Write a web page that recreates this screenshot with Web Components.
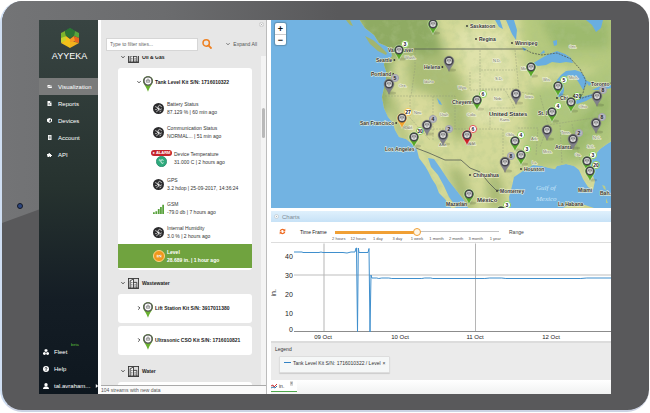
<!DOCTYPE html>
<html lang="en">
<head>
<meta charset="utf-8">
<title>Ayyeka – Visualization</title>
<style>
html,body{margin:0;height:100%;background:#fff}
body{font-family:"Liberation Sans",Arial,sans-serif;font-size:5px;line-height:8px;color:#333}
</style>
</head>
<body>
<ay-device>
  <ay-sidebar>
    <ay-nav icon="folder" active>Visualization</ay-nav>
    <ay-nav icon="report">Reports</ay-nav>
    <ay-nav icon="cube">Devices</ay-nav>
    <ay-nav icon="account">Account</ay-nav>
    <ay-nav icon="puzzle">API</ay-nav>
    <ay-nav slot="foot" low icon="fleet" tag="beta">Fleet</ay-nav>
    <ay-nav slot="foot" low icon="help">Help</ay-nav>
    <ay-nav slot="foot" low icon="user" more>tal.avraham...</ay-nav>
  </ay-sidebar>
  <ay-tree>
    <ay-group>Oil &amp; Gas</ay-group>
    <ay-card open title-text="Tank Level Kit S/N: 1716010322">
      <ay-stream icon="plug" label="Battery Status">87.129 % | 60 min ago</ay-stream>
      <ay-stream icon="plug" label="Communication Status">NORMAL... | 51 min ago</ay-stream>
      <ay-stream icon="temp" alarm label="Device Temperature">31.000 C | 2 hours ago</ay-stream>
      <ay-stream icon="plug" label="GPS">3.2 hdop | 25-09-2017, 14:36:24</ay-stream>
      <ay-stream icon="signal" label="GSM">-79.0 db | 7 hours ago</ay-stream>
      <ay-stream icon="plug" label="Internal Humidity">3.0 % | 2 hours ago</ay-stream>
      <ay-stream icon="level" selected label="Level">28.689 in. | 1 hour ago</ay-stream>
    </ay-card>
    <ay-group>Wastewater</ay-group>
    <ay-card title-text="Lift Station Kit S/N: 3917011380"></ay-card>
    <ay-card title-text="Ultrasonic CSO Kit S/N: 1716010821"></ay-card>
    <ay-group>Water</ay-group>
    <ay-card title-text=""></ay-card>
  </ay-tree>
  <ay-main><ay-map></ay-map><ay-charts></ay-charts></ay-main>
</ay-device>

<script>
const ICONS = {
  folder:'<path fill="#fff" d="M1 2h4l1 1h3v1H3L1 8zM3 5h8L9 8H2z"/>',
  report:'<path fill="#fff" d="M1 0h5v3h3v7H1z"/><path fill="#fff" d="M7 0l2 2H7z"/><path stroke="#2a3535" d="M3 5h3M3 7.500h4"/>',
  cube:'<path fill="#fff" d="M5 0l5 2v5L5 10 0 7V2z"/><path fill="#2a3535" d="M5 4l3-1.500v4L5 8z"/>',
  account:'<path fill="#fff" d="M2 0h7v10H2z"/><path stroke="#2a3535" d="M3.500 2.500h4M3.500 5h4M3.500 7.500h4"/>',
  puzzle:'<path fill="#fff" d="M0 4h3C2 1 7 1 6 4h2v2c3-1 3 3 0 2v2H6c0-2-2-2-2 0H1V7H0z"/>',
  fleet:'<g fill="#fff"><path d="M5 0l2.500 1.300v2.500L5 5 2.500 3.800V1.300zM2.300 5l2.400 1.300v2.400L2.300 10 0 8.700V6.300zM7.700 5L10 6.300v2.400L7.700 10 5.300 8.700V6.300z"/></g>',
  help:'<circle cx="5" cy="5" r="5" fill="#fff"/><path fill="none" stroke="#141c22" stroke-width="1.500" d="M3.500 4c0-2 3-2 3 0C6.500 5 5 5 5 6.300M5 7v1.300"/>',
  user:'<circle cx="5" cy="2.800" r="2.800" fill="#fff"/><path fill="#fff" d="M0 10c0-6 10-6 10 0z"/>',
  close:'<circle cx="5" cy="5" r="4.300" fill="#f4f4f4" stroke="#aaa" stroke-width=".8"/><path stroke="#999" d="M3.300 3.300l3.400 3.400M6.700 3.300L3.300 6.700"/>',
  search:'<circle cx="4.200" cy="4" r="3.200" fill="none" stroke="#ee8122" stroke-width="1.500"/><path stroke="#ee8122" stroke-width="1.800" d="M6.500 6.400L9.500 9.600"/>',
  down:'<path fill="none" stroke="currentColor" stroke-width="2" d="M1 3l4 4 4-4"/>',
  right:'<path fill="none" stroke="currentColor" stroke-width="2.200" d="M3 1l4 4-4 4"/>',
  caret:'<path fill="#fff" d="M2 0l6 5-6 5z"/>',
  building:'<rect x=".4" y=".4" width="9.200" height="9.200" fill="#ddd" stroke="#333" stroke-width=".8"/><path fill="#fff" stroke="#333" stroke-width=".8" d="M2 9V2.500L5 1v8M5 4h3v5"/><path stroke="#333" stroke-width=".8" d="M3 4h1M3 5.700h1M3 7.300h1M6 5.700h1M6 7.300h1M1 9h8"/>',
  plug:'<circle cx="5" cy="5" r="5" fill="#2b2b2d"/><path fill="none" stroke="#d4d4d4" stroke-width=".8" d="M2 3.200l2 1 2-2.400M4 4.200l1.300 2.200L3 8M5.300 6.400L8 5.300M6 2l2 1.500M2 6h1.500M6 8l1.500-.8"/><circle cx="5" cy="5" r="1" fill="#eee"/>',
  temp:'<circle cx="5" cy="5" r="4.700" fill="#2eaa7c" stroke="#1d7f63" stroke-width=".6"/><circle cx="3.400" cy="3.800" r=".6" fill="none" stroke="#fff" stroke-width=".5"/><path fill="none" stroke="#fff" stroke-width=".8" d="M6.800 4c-2-1.500-3 .6-2 2 .7 1 1.500.6 2 .2"/>',
  signal:'<path fill="#57a13a" d="M0 8.500h1.600V10H0zM2.200 7.500h1.600V10H2.200zM4.400 5.500H6V10H4.400zM6.400 3.700H8V10H6.400zM8.400 1.500H10V10H8.400z"/>',
  level:'<circle cx="5" cy="5" r="4.600" fill="#f0981c" stroke="#ffd58b" stroke-width=".8"/><path stroke="#fff" stroke-width=".8" d="M3.500 4v2.200M5 6.200V4.300L6.500 6V4"/>',
  refresh:'<g fill="#ee6b22"><path d="M1 4.500C1 1 6 0 7.500 2L9 1v3.500H5.500L6.500 3.300C5 2.500 3 3 3 4.500zM9 5.500C9 9 4 10 2.500 8L1 9V5.500h3.500L3.500 6.700C5 7.500 7 7 7 5.500z"/></g>',
  pin:'<path fill="#69b12f" d="M0 4.200C0-1.400 9-1.400 9 4.200 9 7 6 9 4.500 14 3 9 0 7 0 4.200z"/><circle cx="4.500" cy="4.300" r="3.700" fill="#fff" stroke="#555" stroke-width="1.300"/><path fill="none" stroke="#666" stroke-width=".6" d="M3 3.400h3v2H3zM4.500 2v3"/>',
  gear:'<circle cx="5" cy="5" r="4" fill="#fff" stroke="#a9b6bf"/><circle cx="5" cy="5" r="1.400" fill="#a9b6bf"/>',
  hex:'<path fill="#1f8a3c" d="M9 0l5 3-5 5-5-5z"/><path fill="#7cb52c" d="M4 3L0 5v6l5-3z"/><path fill="#2c7434" d="M4 3l5-3 5 3-1 5-4 2-4-2z"/><path fill="#57a63a" d="M14 3l4 2v5l-5-2z"/><path fill="#c9d32c" d="M0 10l5-2v5l-5 2z"/><path fill="#f4c21a" d="M5 8l4 3v9l-9-5 5-3z"/><path fill="#f59a22" d="M9 11l4-3 2 5-6 2z"/><path fill="#e9641f" d="M13 8l5 2v5l-4-1z"/><path fill="#f2b01c" d="M9 14l5 0 4 1-9 5z"/>'
};
const VB = {pin:'0 0 9 14', hex:'0 0 18 20'};
const define = (name, html, setup) => customElements.define(name, class extends HTMLElement {
  constructor(){ super(); this.attachShadow({mode:'open'}); }
  connectedCallback(){
    if (this.shadowRoot.childNodes.length) return;
    const t = document.createElement('template');
    t.innerHTML = typeof html === 'function' ? html(this) : html;
    this.shadowRoot.append(t.content.cloneNode(true));
    if (setup) setup(this);
  }
});

define('ay-icon', el => {
  const n = el.getAttribute('name');
  return `<style>:host{display:inline-block;width:10px;height:10px;flex:none}svg{display:block;width:100%;height:100%}</style>
  <svg viewBox="${VB[n] || '0 0 10 10'}" aria-hidden="true">${ICONS[n]}</svg>`;
});

define('ay-device', `<style>
:host{display:block;height:100vh;box-sizing:border-box;padding:1px 1px 1px 0}
.frame{position:relative;height:100%;box-sizing:border-box;padding:19px 38px 16px 37px;border-left:2px solid #cfdef2;border-bottom:2px solid #ccd3e4;border-radius:22px;background:#59595b;overflow:hidden}
.glare{position:absolute;inset:0;clip-path:polygon(0 0,94% 0,0 222px);background:linear-gradient(90deg,#737476,#6b6c6e 25%,#59595b 52%)}
.cam{position:absolute;left:15px;top:202px;width:4px;height:4px;border-radius:50%;border:1px solid #151a26;background:#2b4680}
.screen{position:relative;display:flex;height:100%;overflow:hidden;background:#fff}
</style><div class="frame"><div class="glare"></div><div class="cam"></div><div class="screen"><slot></slot></div></div>`);

define('ay-sidebar', `<style>
:host{display:flex;flex-direction:column;flex:none;width:59px;background:linear-gradient(#384442,#26322f 45%,#141d25 75%,#0e171f)}
.logo{display:flex;flex-direction:column;align-items:center;gap:2px;height:58px;box-sizing:border-box;padding-top:8px;padding-left:2px;color:#fff;font-size:9px;line-height:12px}
.logo ay-icon{width:18px;height:20px}
nav{display:flex;flex-direction:column;flex:1}
.gap{flex:1}
</style><div class="logo"><ay-icon name="hex"></ay-icon><span>AYYEKA</span></div>
<nav><slot></slot><div class="gap"></div><slot name="foot"></slot></nav>`);

define('ay-nav', el => `<style>
:host{display:block}
a{display:flex;align-items:center;gap:6px;height:17px;padding-left:8px;color:#fff;text-decoration:none;font-size:6px;line-height:8px;white-space:nowrap;position:relative}
:host([active]) a{background:#7a7b7b}
:host([low]) a{padding-left:4px;gap:5px}
ay-icon{width:5px;height:5px}
:host([low]) ay-icon{width:6px;height:6px}
sup{position:absolute;left:32px;top:-1px;color:#5fc03b;font-size:4px;line-height:6px}
:host([low]) .more{width:4px;height:4px}
</style><a href="#"><ay-icon name="${el.getAttribute('icon')}"></ay-icon><slot></slot>${el.hasAttribute('tag') ? `<sup>${el.getAttribute('tag')}</sup>` : ''}${el.hasAttribute('more') ? '<ay-icon class="more" name="caret"></ay-icon>' : ''}</a>`);

define('ay-tree', `<style>
:host{display:flex;flex-direction:column;flex:none;width:166px;box-sizing:border-box;margin-left:3px;background:#e7e7e7;border-right:1px solid #bcbcbc;position:relative}
header{display:flex;align-items:center;height:36px;box-sizing:border-box;padding:12px 9px 0 5px;position:relative}
input{width:92px;height:13px;box-sizing:border-box;border:1px solid #d6d6d6;padding:0 3px;background:#fff;font:5px "Liberation Sans",Arial,sans-serif;color:#444}
input::placeholder{color:#666;opacity:1}
button{border:0;background:none;padding:0;display:flex;align-items:center;font:5px/8px "Liberation Sans",Arial,sans-serif;color:#555}
.s{margin-left:4px}
.e{margin-left:auto;gap:3px}.e ay-icon{width:4px;height:4px}
.x{position:absolute;right:2px;top:2px}.x ay-icon{width:5px;height:5px}
.body{flex:1;min-height:0;display:flex}
.list{flex:1;overflow:hidden;padding:0 9px 0 17px}
.inner{margin-top:-6px}
.bar{width:5px;background:#f4f4f4}
.thumb{width:3px;height:30px;margin:52px 1px 0;border-radius:2px;background:#b9b9b9}
footer{height:9px;border-top:1px solid #aaa;box-sizing:border-box;background:#fafafa;color:#555;line-height:8px;padding-left:0}
</style>
<header><input type="search" aria-label="Filter sites" placeholder="Type to filter sites..."><button class="s" aria-label="Search"><ay-icon name="search"></ay-icon></button><button class="e"><ay-icon name="down"></ay-icon>Expand All</button><button class="x" aria-label="Close"><ay-icon name="close"></ay-icon></button></header>
<div class="body"><div class="list"><div class="inner"><slot></slot></div></div><div class="bar"><div class="thumb"></div></div></div>
<footer>104 streams with new data</footer>`);

define('ay-group', `<style>
:host{display:flex;align-items:center;gap:3px;height:14px;padding:0 0 4px 3px;font-weight:700;color:#222}
:host(:not(:first-child)){padding:6px 0 4px 3px}
.c{width:4px;height:4px}
.b{width:11px;height:11px}
</style><ay-icon class="c" name="down"></ay-icon><ay-icon class="b" name="building"></ay-icon><slot></slot>`);

define('ay-card', el => `<style>
:host{display:block;background:#fff;border-radius:3px;margin-bottom:3px;padding-bottom:1px}
:host([open]){margin-bottom:0;padding-bottom:2px}
.t{display:flex;align-items:center;height:28px;padding-left:19px;gap:2px;font-weight:700;color:#222;white-space:nowrap}
.c{width:4px;height:4px}
.p{width:10px;height:16px;margin:3px 0 0 0}
</style><div class="t"><ay-icon class="c" name="${el.hasAttribute('open') ? 'down' : 'right'}"></ay-icon><ay-icon class="p" name="pin"></ay-icon><span>${el.getAttribute('title-text')}</span></div><slot></slot>`);

define('ay-stream', el => `<style>
:host{display:flex;align-items:center;gap:3px;height:24px;padding-left:35px;white-space:nowrap;color:#333}
:host([alarm]){height:28px}
:host([selected]){background:#70a33f;color:#fff;font-weight:700}
.i{width:11px;height:11px}
:host([selected]) .i{width:12px;height:12px;margin-right:-1px}
.a{display:flex;flex-direction:column;align-items:center;margin:0 -1px 0 -2px}
.a b{background:#c5242d;color:#fff;border-radius:3px;width:21px;font-size:4px;line-height:6px;text-align:center}
</style>${el.hasAttribute('alarm') ? '<span class="a"><b>● ALARM</b><ay-icon class="i" name="temp"></ay-icon></span>' : `<ay-icon class="i" name="${el.getAttribute('icon')}"></ay-icon>`}
<div><div>${el.getAttribute('label')}</div><div><slot></slot></div></div>`);

define('ay-main', `<style>:host{display:flex;flex-direction:column;flex:1;min-width:0;padding-left:4px}</style><slot></slot>`);

const PINS = [
 ['g',433,24],['g',399,50,3],['k',449,61],['k',389,84,5],['k',427,125,4],['o',402,118,27],['k',443,135,2],['g',414,137,30],
 ['g',531,67],['g',558,86,5],['g',477,100,6],['k',516,94],['k',597,96,8],['g',571,102,420],['k',596,123,8],['g',552,112,4],['k',547,130],
 ['r',467,135,6],['g',515,141,4],['k',573,139,2],['k',505,162,8],['g',521,155,3],['g',587,161,3],['g',590,171,20],['g',469,194],['g',501,211,3]
];
const PLACES = [
 [388,52,'Vancouver'],[376,62,'Seattle',1],[371,76,'Portland',1],[424,69,'Helena',1],[360,125,'San Francisco',1],[385,151,'Los Angeles'],
 [470,28,'Saskatoon',-1],[479,41,'Regina',-1],[515,45,'Winnipeg',-1],[452,104,'Cheyenne'],[524,171,'Houston',-1],[473,177,'Chihuahua',-1],
 [500,193,'Monterrey',-1],[446,206,'Mazatlán'],[558,206,'La Habana'],[578,192,'Miami'],[555,149,'Atlanta'],[560,100,'Chi.',-1],[591,86,'Toronto'],[600,195,'Bah.'],[538,115,'St. L.']
];
const STATES = [
 [569,48,'Ont.'],[493,62,'N.D.'],[495,80,'S.D.'],[494,100,'Neb.'],[525,98,'Iowa'],[458,89,'Wyo.'],[399,87,'Ore.'],[424,83,'Idaho'],[440,116,'Utah'],[414,114,'Nev.'],
 [543,81,'Wis.'],[569,79,'Mich.'],[506,136,'Okla.'],[543,153,'Miss.'],[532,164,'La.'],[575,156,'Ga.'],[531,140,'Ark.'],[561,134,'Tenn.'],[467,116,'Colo.'],[500,121,'Kans.'],
 [593,139,'N.C.'],[587,148,'S.C.'],[579,108,'Ohio'],[405,59,'Wash.'],[521,70,'Minn.'],[468,145,'N.M.'],[404,129,'Calif.'],[439,146,'Ariz.']
];
const COL = {g:'#58a927',k:'#80808a',o:'#f2a22b',r:'#cb2027'};
const HALO = {g:'#8fcf5c',k:'#a5a5ad',o:'#f4c95c',r:'#e4555a'};
const pin = ([c,x,y,n]) => `<g transform="translate(${x} ${y})">
<ellipse cx="3" cy="9" rx="4" ry="1.500" fill="#000" opacity=".13"/>
${n ? `<circle cx="6" cy="-6" r="3.600" fill="${c === 'k' ? '#b9b9c0' : '#fff'}" stroke="${HALO[c]}" stroke-width="1"/><text x="6" y="-4" text-anchor="middle" class="n">${n}</text>` : ''}
<path fill="${COL[c]}" stroke="${c === 'k' ? '#777' : '#fff'}" stroke-width=".4" d="M-5 0C-5-6.500 5-6.500 5 0 5 3.500 2 5 0 10.500-2 5-5 3.500-5 0z"/>
<circle r="3.700" fill="#eee" stroke="#45454b" stroke-width="1.500"/><path fill="none" stroke="#666" stroke-width=".7" d="M0 2.500V0L-2-1M0 0l2-1M-2 1.200v-2L0-2l2 1.200v2"/></g>`;

define('ay-map', `<style>
:host{display:block;flex:188 1 0;min-height:0;position:relative;background:#72b3e2}
svg{display:block;width:100%;height:100%}
text{font-family:"Liberation Sans",Arial,sans-serif}
.p{font-size:5px;font-weight:700;fill:#333;stroke:#f2f4dc;stroke-width:1px;paint-order:stroke}
.s{font-size:4px;fill:#666a52;stroke:#f4f6e2;stroke-width:1px;paint-order:stroke}
.big{font-size:6px;font-weight:700;fill:#333;stroke:#f2f4dc;stroke-width:1px;paint-order:stroke}
.sea{font:italic 7px "Liberation Serif",serif;fill:#c9e6f8}
.n{font-size:5px;font-weight:700;fill:#222}
.zoom{position:absolute;left:4px;top:3px;display:flex;flex-direction:column;border-radius:2px;background:#fff;box-shadow:0 0 1px 1px rgba(60,80,90,.35)}
button{width:11px;height:11px;border:0;padding:0;background:none;font:700 9px/10px "Liberation Sans",Arial,sans-serif;color:#111}
button+button{border-top:1px solid #ccc}
</style>
<svg viewBox="271 20 340 188" preserveAspectRatio="xMidYMid slice" role="img" aria-label="Site map">
<defs>
<clipPath id="land"><path id="coast" d="M359 19L365 28 374 35 379 43 386 46 391 49 392 56 389 60 385 59 384 65 386 71 386 79 384 88 382 97 384 108 388 117 393 123 395 130 399 137 406 139 412 144 417 150 419 158 425 166 428 171 432 179 436 185 439 193 445 199 452 209 456 207 449 197 444 186 438 175 431 167 428 158 434 159 441 169 449 181 457 191 464 200 469 209H510L509 197 512 186 514 177 523 171 533 165 542 166 549 168 555 169 557 166 566 164 574 166 579 170 583 179 588 187 593 190 595 181 591 171 590 164 594 156 600 149 607 144 612 141V19z"/></clipPath>
<filter id="soft"><feGaussianBlur stdDeviation="5"/></filter>
<filter id="relief" x="0" y="0" width="100%" height="100%"><feTurbulence type="fractalNoise" baseFrequency=".12" numOctaves="4" seed="8"/><feColorMatrix values="0 0 0 0 .42  0 0 0 0 .55  0 0 0 0 .25  2.6 0 0 0 -1.150"/></filter>
</defs>
<rect x="271" y="20" width="340" height="188" fill="#72b3e2"/>
<use href="#coast" fill="#d3d998"/>
<g clip-path="url(#land)">
 <g filter="url(#soft)">
  <path fill="#8fab63" d="M355 10h75l15 45 10 25-15 8-25-35-22 4-7 60-10-5z"/>
  <path fill="#abbd76" d="M405 60l40-8 20 35 5 50-15 5-20-45-25-10zM385 95l10 2 14 45-6 4z"/>
  <path fill="#b5c97e" d="M520 10h100v60l-95-5z"/>
  <path fill="#afc67b" d="M530 90l87-25v75l-30 25-65 5z"/>
  <path fill="#93b368" d="M560 140l52-55v30l-40 45zM540 19h70v30h-55z" opacity=".7"/>
  <path fill="#a9ba74" d="M447 165l15 5 15 40h-18zM488 170l15 10v30h-15z"/>
  <path fill="#dfe2aa" d="M455 30h50l10 40-8 60-35-8-5-50z"/>
  <path fill="#dcdb9c" d="M395 95l45 5 5 30-30 10z" opacity=".6"/>
 </g>
 <rect x="350" y="20" width="261" height="188" filter="url(#relief)" opacity=".32"/>
</g>
<g fill="#a2b56f"><path d="M346 20l4 0 3 6-3-1zM365 36l8 4 8 7 6 6-1 2-8-4-8-7z"/></g>
<path fill="#cfd58f" d="M563 208c8-5 18-5 25-2l9 3h-34z"/><path fill="#b9cb8c" d="M602 185l3 1 1 4-2-1zM606 198l2 5-2 0z"/>
<g fill="#69aee0">
 <path d="M532 64L540 59 547 55 557 51 565 54 571 58 573 63 566 62 560 63 552 62 546 65 538 66zM557 80L561 75 566 71 575 70 581 72 585 77 587 84 583 90 579 83 575 77 568 75 563 81 564 91 562 97 558 97 556 89zM574 102l8-5 10-3 3 2-9 5-9 3zM592 90l8-4 11-1v3l-10 2zM585 80l7 3-3 3z"/>
 <path d="M495 20h5l3 9-4-2zM506 20h8l3 10-1 10-4-6zM586 20h17l-2 8-5 4-4-7zM553 41l4-1v5l-3 1zM522 47l5 2-3 2zM540 54l4-4 1 3zM437 98l3 3 2 4-3-1z"/>
</g>
<g fill="none" stroke="#535a52" stroke-width=".8"><path d="M391 49H524"/><path stroke-dasharray="2 1" d="M524 49l8 4 10 2 15-2 14 6 9 10 6 12-3 12-4 6 20-6 4-8 12-3"/><path d="M416 148l13 5 16 7h16l9 8 10 4 9 11 7 7 10 1"/></g>
<g fill="none" stroke="#8f9678" stroke-width=".5" stroke-dasharray="2 1" opacity=".8"><path d="M480 50v20h35M480 70v19h38M385 96h70v33h-28M410 96v22l20 22M433 96v45M455 129h48v33M415 50v18l-4 28M470 72v18h35l10 18h-25v22M515 50l4 42 15 2M518 128h20l-2 28M540 95l8 30 52-8M548 125l-8 22M560 125l2 38M572 124l8 36"/></g>
<g id="labels"></g>
<text class="big" x="489" y="116">United States</text><text class="big" x="477" y="202">México</text>
<text class="sea" x="536" y="190">Gulf of</text><text class="sea" x="536" y="201">Mexico</text>
<g id="pins"></g>
</svg>
<div class="zoom"><button aria-label="Zoom in">+</button><button aria-label="Zoom out">−</button></div>`, el => {
  const r = el.shadowRoot, labels = r.getElementById('labels');
  labels.innerHTML = STATES.map(([x,y,t]) => `<text class="s" x="${x}" y="${y}">${t}</text>`).join('') + PLACES.map(([x,y,t]) => `<text class="p" x="${x}" y="${y}">${t}</text>`).join('');
  const names = labels.querySelectorAll('.p');
  PLACES.forEach(([x,y,,side], i) => {
    if (!side) return;
    const cx = side < 0 ? x - 3 : x + names[i].getComputedTextLength() + 2;
    labels.insertAdjacentHTML('beforeend', `<circle cx="${cx}" cy="${y - 2}" r=".9" fill="#333"/>`);
  });
  r.getElementById('pins').innerHTML = PINS.map(pin).join('');
});

define('ay-charts', `<style>
:host{display:flex;flex-direction:column;flex:186 1 0;min-height:0}
.h{display:flex;align-items:center;gap:3px;margin-top:3px;height:11px;padding-left:3px;background:linear-gradient(#dff0fc,#c7e2f7);color:#7f8b94;font-size:6px}
.h ay-icon{width:5px;height:5px}
.tools{display:flex;height:20px;border-bottom:1px solid #ddd;padding-left:8px;align-items:flex-start}
.tools>*{margin-top:6px}
button{border:0;padding:0;background:none;font:5px/8px "Liberation Sans",Arial,sans-serif;color:#444}
.r ay-icon{width:7px;height:7px;display:block}
label{margin-left:14px;width:27px;color:#222}
.sl{width:164px;margin-left:8px}
input{appearance:none;-webkit-appearance:none;display:block;width:100%;height:8px;margin:0;background:linear-gradient(90deg,#f0a035 50%,transparent 50%) 0 3px/100% 3px no-repeat,linear-gradient(#c4c4c4,#c4c4c4) 0 3px/100% 1px no-repeat}
input::-webkit-slider-thumb{-webkit-appearance:none;width:8px;height:8px;box-sizing:border-box;border-radius:50%;border:1px solid #f0a035;background:#fff6e6}
.ticks{display:grid;grid-template-columns:repeat(9,1fr);margin:0 -6px;font-size:4px;line-height:5px;text-align:center;color:#555;white-space:nowrap}
.range{margin-left:10px}
.plot{flex:1;min-height:0}
.plot svg{display:block;width:100%;height:100%}
text{font:7px "Liberation Sans",Arial,sans-serif;fill:#222}
.x text{font-size:6px;text-anchor:middle}
.leg{height:39px;box-sizing:border-box;background:#ebebeb;border-top:2px solid #dcdcdc;padding:2px 4px;color:#333}
.key{display:flex;width:max-content;align-items:center;gap:2px;height:17px;box-sizing:border-box;margin:3px 0 0 4px;padding:0 4px 4px;background:#f5f7f7;border:1px solid #ddd;border-radius:1px;box-shadow:0 1px 1px #ccc}
.key i{width:7px;height:1px;background:#3182c4}
.foot{height:14px;background:linear-gradient(#fff,#f0f1f1)}
.tab{display:flex;align-items:center;width:26px;height:12px;box-sizing:border-box;background:#fff;border-bottom:1px solid #4ea64c;color:#333;gap:2px}
.tab svg{width:6px;height:6px;flex:none}
.tab button{margin:-4px 4px 0 auto;background:#ddd;font-size:5px;line-height:5px;color:#777}
</style>
<div class="h"><ay-icon name="gear"></ay-icon>Charts</div>
<div class="tools"><button class="r" aria-label="Refresh"><ay-icon name="refresh"></ay-icon></button><label for="tf">Time Frame</label>
<div class="sl"><input id="tf" type="range" min="0" max="8" value="4"><div class="ticks"><span>2 hours</span><span>12 hours</span><span>1 day</span><span>3 day</span><span>1 week</span><span>1 month</span><span>2 month</span><span>3 month</span><span>1 year</span></div></div><button class="range">Range</button></div>
<div class="plot"><svg viewBox="271 242 340 99" preserveAspectRatio="xMidYMid slice" role="img" aria-label="Level chart">
<path d="M294 274.500H611" stroke="#dedede" stroke-width="2"/><path d="M324 243V331M475.500 243V331" stroke="#b5b5b5" fill="none"/><path d="M294 331H611" stroke="#8c8c8c"/>
<path fill="none" stroke="#3f8fcd" d="M294 251.500h8l1 .5h16l2-.5 2 .5h20l4 .5 4-1h4l1-4 .5 0 1 83.500.8-83.500.7 4.500h9l1-4 1 83.500 1-57 .8 3h5l2 .5 3-.5h7l3 .5h30l3-.5h6l2 .5h52l5-.5h12l4 .5h75l6-.5h30l5 .500 8-.500h9"/>
<g><text x="285" y="258">40</text><text x="285" y="277">30</text><text x="285" y="296">20</text><text x="285" y="315">10</text><text x="289" y="331">0</text></g>
<text transform="translate(276 296) rotate(-90)">in.</text>
<g class="x"><text x="323" y="338">09 Oct</text><text x="400" y="338">10 Oct</text><text x="475" y="338">11 Oct</text><text x="551" y="338">12 Oct</text></g>
</svg></div>
<div class="leg"><div>Legend</div><div class="key"><i></i><span>Tank Level Kit S/N: 1716010322 / Level</span><span>×</span></div></div>
<div class="foot"><div class="tab"><svg viewBox="0 0 6 6" aria-hidden="true"><path fill="none" stroke="#c33" d="M0 3l2-1 1 2 3-3"/><path fill="none" stroke="#37a" d="M0 5l2-1 2 1 2-2"/></svg>in.<button aria-label="Close tab">×</button></div></div>`);
</script>
</body>
</html>
